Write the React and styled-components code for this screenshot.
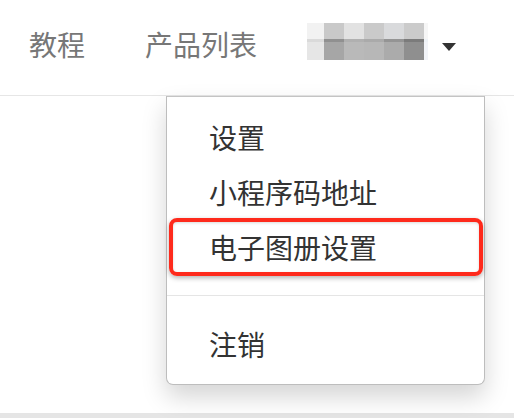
import React from 'react';
import styled, { createGlobalStyle } from 'styled-components';

const GlobalStyle = createGlobalStyle`
  html, body {
    margin: 0;
    padding: 0;
    background: #fff;
  }
  body {
    font-family: "Noto Sans CJK SC", "Noto Sans", sans-serif;
  }
`;

const Page = styled.div`
  position: relative;
  width: 514px;
  height: 418px;
  overflow: hidden;
  display: flex;
  flex-direction: column;
`;

const Navbar = styled.div`
  height: 96px;
  box-sizing: border-box;
  border-bottom: 1px solid #e6e6e6;
  display: flex;
  align-items: center;
  padding-left: 29px;
`;

const NavLink = styled.a`
  font-size: 28px;
  color: #777;
  line-height: 1;
  margin-right: ${(p) => p.$gap || 0}px;
  margin-top: -7px;
`;

const UserToggle = styled.div`
  display: flex;
  align-items: center;
  margin-top: -12px;
`;

const Caret = styled.span`
  width: 0;
  height: 0;
  margin-left: 14px;
  margin-top: 10px;
  border-left: 7px solid transparent;
  border-right: 7px solid transparent;
  border-top: 8px solid #333;
`;

const Content = styled.div`
  flex: 1;
  display: flex;
  flex-direction: column;
  justify-content: flex-end;
`;

const BottomStrip = styled.div`
  height: 5px;
  background: #e5e5e5;
`;

const Menu = styled.ul`
  position: absolute;
  left: 166px;
  top: 96px;
  width: 319px;
  box-sizing: border-box;
  margin: 0;
  padding: 12px 0 13px;
  list-style: none;
  background: #fff;
  border: 1px solid #bdbdbd;
  border-top-color: #c4c4c4;
  border-radius: 0 0 7px 7px;
  box-shadow: 0 12px 24px rgba(0, 0, 0, 0.17);
`;

const MenuItem = styled.li`
  position: relative;
  height: 55px;
  display: flex;
  align-items: center;
  padding-left: 42px;
  font-size: 28px;
  color: #333;
`;

const Highlight = styled.span`
  position: absolute;
  left: 2px;
  right: 1px;
  top: -1px;
  bottom: -2px;
  border: 4px solid #fe2a1c;
  border-radius: 8px;
  box-shadow: 0 2px 5px rgba(0, 0, 0, 0.3), inset 0 1px 3px rgba(0, 0, 0, 0.15);
`;

const Divider = styled.li`
  height: 1px;
  margin: 21px 0 20px;
  background: #e5e5e5;
`;

const mosaic = [
  { h: 16, colors: ['#f2f2f2', '#c9c9c9', '#e2e2e2', '#cacaca', '#d9dadc', '#cbcbcb', '#f6f6f6'] },
  { h: 3, colors: ['#dadada', '#909090', '#b0b0b0', '#aaaaaa', '#949494', '#7b7b7b', '#eef2f6'] },
  { h: 18, colors: ['#e6e6e6', '#a6a6a6', '#b9b9b9', '#b7b7b7', '#ababab', '#8f8f8f', '#f2f4f8'] },
];
const colWidths = [17, 20, 20, 20, 20, 20, 4];

function BlurredName() {
  let y = 0;
  return (
    <svg width="121" height="37" viewBox="0 0 121 37">
      {mosaic.map((row, ri) => {
        let x = 0;
        const rects = row.colors.map((c, ci) => {
          const r = <rect key={ci} x={x} y={y} width={colWidths[ci]} height={row.h} fill={c} />;
          x += colWidths[ci];
          return r;
        });
        y += row.h;
        return <g key={ri}>{rects}</g>;
      })}
    </svg>
  );
}

export default function App() {
  return (
    <>
      <GlobalStyle />
      <Page>
        <Navbar>
          <NavLink $gap={60}>教程</NavLink>
          <NavLink $gap={50}>产品列表</NavLink>
          <UserToggle>
            <BlurredName />
            <Caret />
          </UserToggle>
        </Navbar>
        <Content>
          <BottomStrip />
        </Content>
        <Menu>
          <MenuItem>设置</MenuItem>
          <MenuItem>小程序码地址</MenuItem>
          <MenuItem>
            <Highlight />
            电子图册设置
          </MenuItem>
          <Divider />
          <MenuItem>注销</MenuItem>
        </Menu>
      </Page>
    </>
  );
}
